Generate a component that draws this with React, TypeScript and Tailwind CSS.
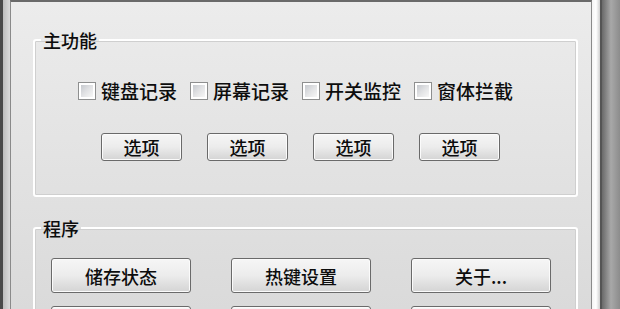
import type { ReactNode } from "react";

const FONT = "[font-family:'Noto_Sans_CJK_SC','Noto_Sans',sans-serif]";

function CheckBox({ label }: { label: string }) {
    return (
        <label className="flex items-center gap-[5px]">
            <span className="w-[18px] h-[18px] border border-[#8e8f8f] bg-white p-[2px] flex">
                <span className="flex-1 bg-gradient-to-br from-[#c6c9ce] via-[#e2e3e5] to-[#f7f7f7]" />
            </span>
            <span className="text-[19px] leading-[24px] font-medium text-[#0d0d0d]">{label}</span>
        </label>
    );
}

function WinButton({ children, w, h }: { children: ReactNode; w: string; h: string }) {
    return (
        <button
            className={`${w} ${h} shrink-0 rounded-[3px] border border-[#6a6a6a] bg-gradient-to-b from-[#f6f6f6] via-[#ececec] to-[#d4d4d4] shadow-[inset_0_0_0_1px_#fbfbfb] text-[18px] leading-none font-medium text-[#0d0d0d] flex items-center justify-center`}
        >
            {children}
        </button>
    );
}

function GroupBox({ title, className, children }: { title: string; className: string; children: ReactNode }) {
    return (
        <fieldset className={`border-2 border-white rounded-[3px] shadow-[inset_0_0_0_1px_#cfcfcf] ${className}`}>
            <legend className="ml-[6px] px-[2px] text-[18px] leading-[20px] font-medium text-[#0d0d0d]">{title}</legend>
            {children}
        </fieldset>
    );
}

export default function App() {
    const features = ["键盘记录", "屏幕记录", "开关监控", "窗体拦截"];

    return (
        <div className={`w-[620px] h-[309px] overflow-hidden flex ${FONT}`}>
            {/* left frame */}
            <div className="w-[3px] bg-[#4a4a4a]" />
            <div className="w-[7px] bg-gradient-to-r from-[#bdbdbd] to-[#dcdcdc]" />

            {/* dialog body */}
            <div className="w-[582px] border-l border-r border-[#8a8a8a] border-t-2 border-t-[#6a6a6a] bg-gradient-to-b from-[#ececec] to-[#dadada] pl-[22px] pr-[13px] pt-[28px]">
                <GroupBox title="主功能" className="pb-[34px]">
                    <div className="flex gap-[13px] pl-[43px] pt-[29px]">
                        {features.map(f => <CheckBox key={f} label={f} />)}
                    </div>
                    <div className="flex gap-[25px] pl-[66px] mt-[30px]">
                        {[0, 1, 2, 3].map(i => <WinButton key={i} w="w-[81px]" h="h-[28px]">选项</WinButton>)}
                    </div>
                </GroupBox>

                <GroupBox title="程序" className="mt-[21px] pb-[20px]">
                    <div className="grid grid-cols-[140px_140px_140px] gap-x-[40px] gap-y-[13px] pl-[16px] pt-[20px]">
                        <WinButton w="w-[140px]" h="h-[35px]">储存状态</WinButton>
                        <WinButton w="w-[140px]" h="h-[35px]">热键设置</WinButton>
                        <WinButton w="w-[140px]" h="h-[35px]">关于...</WinButton>
                        <WinButton w="w-[140px]" h="h-[35px]">&nbsp;</WinButton>
                        <WinButton w="w-[140px]" h="h-[35px]">&nbsp;</WinButton>
                        <WinButton w="w-[140px]" h="h-[35px]">&nbsp;</WinButton>
                    </div>
                </GroupBox>
            </div>

            {/* right frame */}
            <div className="w-[8px] bg-gradient-to-r from-[#f4f4f4] via-white to-[#d0d0d0]" />
            <div className="w-[2px] bg-[#555555]" />
            <div className="flex-1 bg-gradient-to-r from-[#6a6a6a] via-[#a8a8a8] to-[#8c8c8c]" />
        </div>
    );
}
